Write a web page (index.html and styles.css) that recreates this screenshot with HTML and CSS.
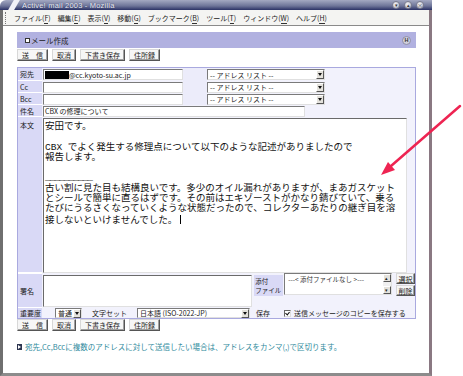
FILE: index.html
```html
<!DOCTYPE html>
<html lang="ja">
<head>
    <meta charset="UTF-8">
    <title>Active! mail 2003 - Mozilla</title>
    <link rel="stylesheet" href="styles.css">
</head>
<body>
    <div class="window">
        <div class="titlebar">
            <span class="title-icon"></span>
            <span class="title-text">Active! mail 2003 - Mozilla</span>
            <span class="title-buttons">
                <span class="tbtn">&#9662;</span>
                <span class="tbtn">&#9652;</span>
                <span class="tbtn">&#215;</span>
            </span>
        </div>
        <div class="frame">
            <div class="menubar">
                <span class="grip"></span>
                <span class="menu">ファイル(<u>F</u>)</span>
                <span class="menu">編集(<u>E</u>)</span>
                <span class="menu">表示(<u>V</u>)</span>
                <span class="menu">移動(<u>G</u>)</span>
                <span class="menu">ブックマーク(<u>B</u>)</span>
                <span class="menu">ツール(<u>T</u>)</span>
                <span class="menu">ウィンドウ(<u>W</u>)</span>
                <span class="menu">ヘルプ(<u>H</u>)</span>
            </div>
            <div class="content">
                <div class="panel-head">
                    <span class="square"></span>メール作成
                    <span class="help">H</span>
                </div>
                <div class="btn-row">
                    <span class="btn">送　信</span>
                    <span class="btn">取消</span>
                    <span class="btn">下書き保存</span>
                    <span class="btn">住所録</span>
                </div>

                <div class="form">
                    <div class="row row-to">
                        <div class="label">宛先</div>
                        <div class="input addr"><span class="redact"></span>@cc.kyoto-su.ac.jp</div>
                        <div class="gapcell"></div>
                        <div class="select addr-list">-- アドレス リスト --<span class="arrow"></span></div>
                    </div>
                    <div class="row">
                        <div class="label">Cc</div>
                        <div class="input addr"></div>
                        <div class="gapcell"></div>
                        <div class="select addr-list">-- アドレス リスト --<span class="arrow"></span></div>
                    </div>
                    <div class="row">
                        <div class="label">Bcc</div>
                        <div class="input addr"></div>
                        <div class="gapcell"></div>
                        <div class="select addr-list">-- アドレス リスト --<span class="arrow"></span></div>
                    </div>
                    <div class="row">
                        <div class="label">件名</div>
                        <div class="input subject">CBX の修理について</div>
                    </div>
                    <div class="row row-body">
                        <div class="label">本文</div>
                        <div class="textarea body-text">安田です。

CBX でよく発生する修理点について以下のような記述がありましたので
報告します。

<span class="rule">__________</span>
古い割に見た目も結構良いです。多少のオイル漏れがありますが、まあガスケット
とシールで簡単に直るはずです。その前はエキゾーストがかなり錆びていて、乗る
たびにうるさくなっていくような状態だったので、コレクターあたりの継ぎ目を溶
接しないといけませんでした。<span class="caret"></span></div>
                    </div>
                    <div class="row row-sign">
                        <div class="label">署名</div>
                        <div class="textarea signature"></div>
                        <div class="attach-label">添付<br>ファイル</div>
                        <div class="listbox">
                            <span class="list-item">---&lt; 添付ファイルなし &gt;---</span>
                            <span class="scrollbar">
                                <span class="sb-btn">&#9652;</span>
                                <span class="sb-btn">&#9662;</span>
                            </span>
                        </div>
                        <div class="attach-buttons">
                            <span class="btn small">選択</span>
                            <span class="btn small">削除</span>
                        </div>
                    </div>
                    <div class="row row-opts">
                        <div class="label">重要度</div>
                        <div class="select priority">普通<span class="arrow"></span></div>
                        <div class="opt-label charset-label">文字セット</div>
                        <div class="select charset">日本語 (ISO-2022-JP)<span class="arrow"></span></div>
                        <div class="opt-label save-label">保存</div>
                        <label class="check"><span class="checkbox"></span>送信メッセージのコピーを保存する</label>
                    </div>
                </div>

                <div class="btn-row bottom">
                    <span class="btn">送　信</span>
                    <span class="btn">取消</span>
                    <span class="btn">下書き保存</span>
                    <span class="btn">住所録</span>
                </div>

                <p class="info"><span class="info-icon"></span>宛先,Cc,Bccに複数のアドレスに対して送信したい場合は、アドレスをカンマ(,)で区切ります。</p>
            </div>
        </div>
    </div>

    <svg class="arrow-note" width="463" height="376" viewBox="0 0 463 376">
        <line x1="460" y1="106" x2="391" y2="166" stroke="#ee2452" stroke-width="2.5" stroke-linecap="round"/>
        <polygon points="381,175 395,170 388,162" fill="#ee2452"/>
    </svg>
</body>
</html>
```

FILE: styles.css
```css
* {
    box-sizing: border-box;
}

body {
    margin: 0;
    width: 463px;
    height: 376px;
    overflow: hidden;
    position: relative;
    background-color: #fff;
    font-family: "Noto Sans CJK JP", "Liberation Sans", sans-serif;
    font-size: 7px;
    color: #222;
}

.window {
    width: 432px;
    height: 376px;
    display: flex;
    flex-direction: column;
}

/* title bar */
.titlebar {
    height: 10px;
    display: flex;
    align-items: center;
    background: linear-gradient(#a4a9c2, #6d7498 60%, #2b3266);
    border-top-left-radius: 6px;
}

.title-icon {
    width: 6px;
    height: 10px;
    margin-left: 11px;
    background-color: #f2f2f8;
    transform: skewX(-30deg);
}

.title-text {
    margin-left: 5px;
    font-family: "Liberation Sans", sans-serif;
    font-size: 7.5px;
    color: #eef0f8;
    letter-spacing: 0.2px;
    text-shadow: 0 0 1px #222a55;
}

.title-buttons {
    margin-left: auto;
    margin-right: 8px;
    display: flex;
    gap: 4px;
}

.tbtn {
    width: 8px;
    height: 8px;
    border-radius: 50%;
    background: radial-gradient(circle at 40% 35%, #f2f2f6, #b4b6c4);
    border: 1px solid #7a7c8e;
    font-size: 5px;
    line-height: 6px;
    text-align: center;
    color: #333;
}

/* window frame */
.frame {
    flex: 1;
    display: flex;
    flex-direction: column;
    border-left: 3px solid #6f6f6f;
    border-right: 3px solid #8a7882;
    border-bottom: 3px solid #8c8c8c;
}

.menubar {
    height: 16px;
    display: flex;
    align-items: center;
    gap: 7px;
    padding-left: 2px;
    background-color: #f4f4f2;
    border-bottom: 1px solid #8a8a8a;
    white-space: nowrap;
}

.grip {
    width: 2px;
    height: 12px;
    border-left: 1px dotted #777;
}

.menu u {
    text-decoration: none;
    border-bottom: 1px solid #333;
}

.content {
    flex: 1;
    padding: 6px 13px 0 14px;
    background-color: #fff;
}

/* section header */
.panel-head {
    height: 16px;
    display: flex;
    align-items: center;
    padding-left: 8px;
    background-color: #b1b1e0;
    font-size: 7.5px;
    color: #222;
}

.square {
    width: 5px;
    height: 5px;
    margin-right: 1px;
    border: 1px solid #333;
    background-color: #fff;
}

.help {
    margin-left: auto;
    margin-right: 5px;
    width: 9px;
    height: 9px;
    border-radius: 50%;
    background-color: #d0d0dc;
    border: 1px solid #8e8ea6;
    color: #333;
    font-family: "Liberation Sans", sans-serif;
    font-size: 5.5px;
    font-weight: bold;
    text-align: center;
    line-height: 7px;
}

/* buttons */
.btn-row {
    display: flex;
    gap: 4px;
    margin-top: 1px;
}

.btn-row.bottom {
    margin-top: 0;
}

.btn {
    height: 12px;
    padding: 0 4px;
    display: flex;
    align-items: center;
    justify-content: center;
    background-color: #f6f6f6;
    border: 1px solid;
    border-color: #d8d8d8 #555 #555 #d8d8d8;
    box-shadow: inset -1px -1px 0 #a0a0a0;
    white-space: nowrap;
    color: #222;
}

/* form table */
.form {
    margin-top: 6px;
    border: 1px solid #a9a9df;
    background-color: #f2f2fc;
}

.row {
    height: 12px;
    display: flex;
    align-items: center;
    white-space: nowrap;
}

.row-to {
    height: 13px;
}

.label {
    width: 24px;
    height: 100%;
    margin-right: 1px;
    padding-left: 2px;
    display: flex;
    align-items: center;
    background-color: #d9d9f6;
    border-bottom: 1px solid #fff;
    color: #222;
}

.input {
    height: 11px;
    padding-left: 1px;
    display: flex;
    align-items: center;
    background-color: #fff;
    border: 1px solid;
    border-color: #7a7a7a #e0e0e0 #e0e0e0 #7a7a7a;
}

.addr {
    width: 140px;
}

.subject {
    width: 262px;
}

.redact {
    width: 24px;
    height: 8px;
    background-color: #000;
}

.gapcell {
    width: 24px;
    height: 100%;
    background-color: #ececfa;
}

.select {
    height: 11px;
    padding-left: 2px;
    display: flex;
    align-items: center;
    background-color: #fff;
    border: 1px solid;
    border-color: #7a7a7a #e0e0e0 #e0e0e0 #7a7a7a;
    white-space: pre;
    position: relative;
}

.addr-list {
    width: 118px;
}

.arrow {
    position: absolute;
    right: 0;
    top: 0;
    width: 8px;
    height: 9px;
    background-color: #e4e2dc;
    border: 1px solid;
    border-color: #fff #555 #555 #fff;
}

.arrow::after {
    content: "";
    position: absolute;
    left: 1px;
    top: 2px;
    border-left: 2.5px solid transparent;
    border-right: 2.5px solid transparent;
    border-top: 3px solid #111;
}

.row-body {
    height: 156px;
    align-items: stretch;
}

.row-body .label {
    align-items: flex-start;
    padding-top: 3px;
}

.textarea {
    background-color: #fff;
    border: 1px solid;
    border-color: #6a6a6a #e0e0e0 #e0e0e0 #6a6a6a;
}

.body-text {
    width: 364px;
    margin-top: 1px;
    padding: 3px 0 0 1px;
    white-space: pre;
    font-family: "Liberation Mono", "Noto Sans CJK JP", monospace;
    font-size: 9.5px;
    line-height: 10.3px;
    color: #111;
}

.rule {
    letter-spacing: -1px;
}

.caret {
    display: inline-block;
    width: 1px;
    height: 9px;
    margin-left: 3px;
    vertical-align: -1px;
    background-color: #000;
}

.row-sign {
    height: 35px;
    align-items: flex-start;
}

.row-sign .label {
    border-top: 1px solid #fff;
}

.signature {
    width: 210px;
    height: 32px;
    margin-top: 2px;
}

.attach-label {
    width: 29px;
    height: 21px;
    margin: 2px 1px 0 2px;
    padding: 2px 0 0 1px;
    background-color: #d9d9f6;
    font-size: 6.5px;
    line-height: 8.5px;
}

.listbox {
    width: 108px;
    height: 22px;
    display: flex;
    background-color: #fff;
    border: 1px solid;
    border-color: #7a7a7a #e0e0e0 #e0e0e0 #7a7a7a;
}

.list-item {
    flex: 1;
    padding: 1px 0 0 3px;
    line-height: 8px;
    font-size: 6.5px;
    color: #333;
}

.scrollbar {
    width: 8px;
    display: flex;
    flex-direction: column;
    justify-content: space-between;
    background-color: #f0f0f0;
}

.sb-btn {
    height: 8px;
    background-color: #e4e2dc;
    border: 1px solid;
    border-color: #fff #555 #555 #fff;
    font-size: 5px;
    line-height: 6px;
    text-align: center;
}

.attach-buttons {
    margin-left: 4px;
    display: flex;
    flex-direction: column;
    gap: 1px;
}

.btn.small {
    width: 19px;
    height: 11px;
    padding: 0;
}

.row-opts {
    height: 10px;
}

.row-opts .label {
    border-bottom: 0;
}

.priority {
    width: 27px;
    height: 10px;
    margin-left: 12px;
}

.opt-label {
    height: 100%;
    display: flex;
    align-items: center;
}

.charset-label {
    margin-left: 10px;
    width: 45px;
}

.charset {
    width: 113px;
    height: 10px;
}

.save-label {
    margin-left: 6px;
    width: 28px;
}

.check {
    display: flex;
    align-items: center;
    gap: 3px;
}

.checkbox {
    width: 7px;
    height: 7px;
    background-color: #fff;
    border: 1px solid;
    border-color: #666 #ddd #ddd #666;
    position: relative;
}

.checkbox::after {
    content: "";
    position: absolute;
    left: 1px;
    top: 0;
    width: 2px;
    height: 3px;
    border-right: 1px solid #111;
    border-bottom: 1px solid #111;
    transform: rotate(40deg);
}

/* note */
.info {
    margin: 10px 0 0 0;
    display: flex;
    align-items: center;
    gap: 3px;
    font-size: 7.5px;
    color: #2f8a9c;
    white-space: nowrap;
}

.info-icon {
    width: 5px;
    height: 6px;
    background-color: #2d3550;
    position: relative;
}

.info-icon::after {
    content: "";
    position: absolute;
    left: 1px;
    top: 1px;
    border-top: 2px solid transparent;
    border-bottom: 2px solid transparent;
    border-left: 3px solid #fff;
}

.arrow-note {
    position: absolute;
    left: 0;
    top: 0;
    pointer-events: none;
}
```
